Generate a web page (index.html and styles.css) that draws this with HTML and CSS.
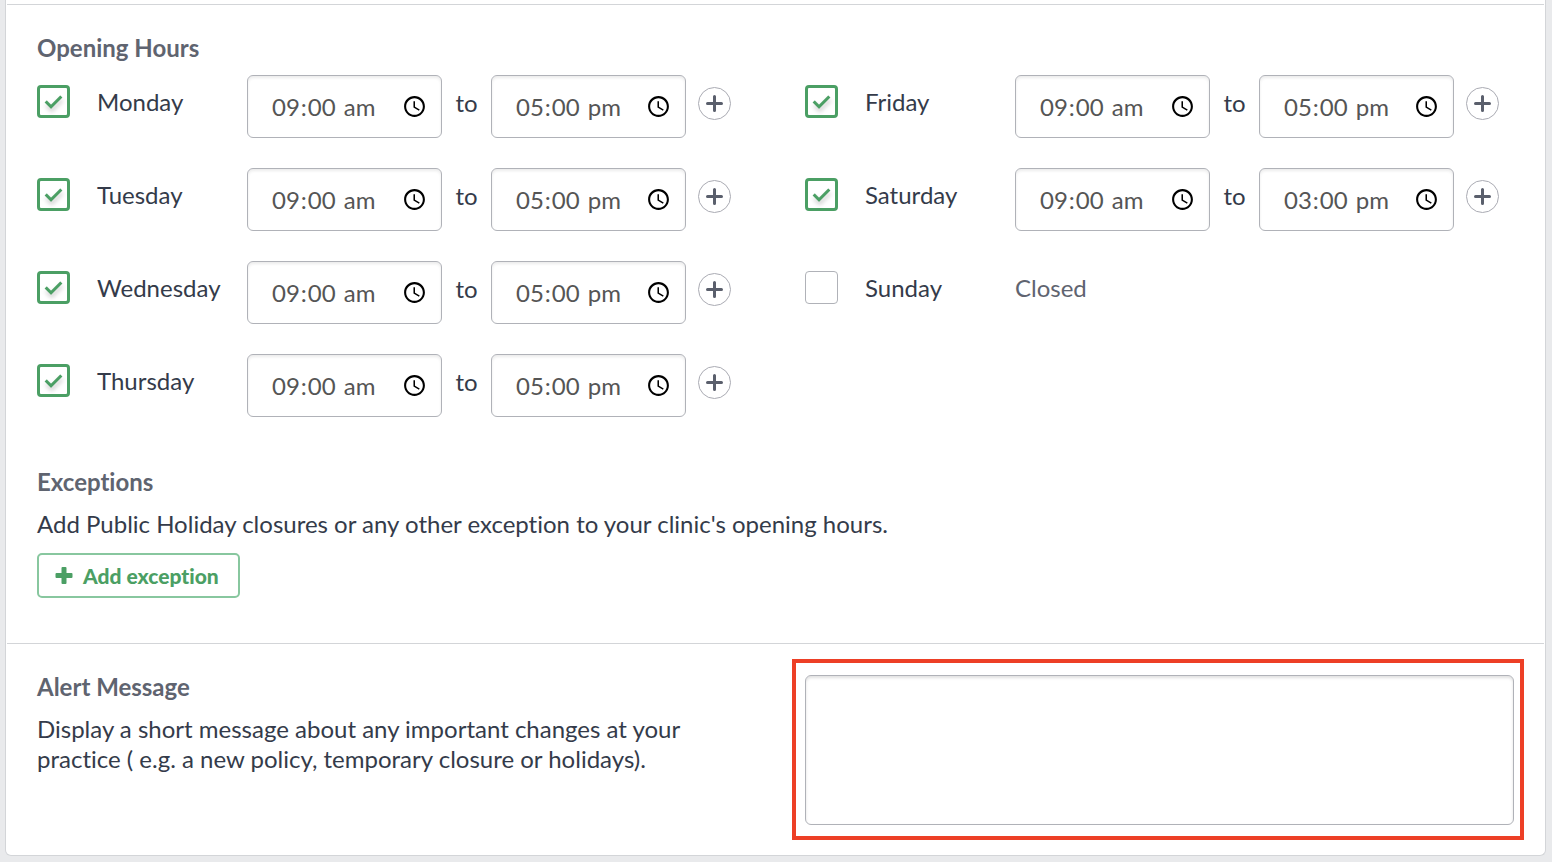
FILE: index.html
```
<!DOCTYPE html>
<html lang="en">
<head>
    <meta charset="UTF-8">
    <meta name="viewport" content="width=device-width, initial-scale=1.0">
    <title>Practice Settings</title>
    <link rel="stylesheet" href="styles.css">
</head>
<body>

    <main class="card">
        <!-- Opening hours and exceptions -->
        <section class="section">
            <h2 class="section-title">Opening Hours</h2>
            <div class="columns">
                <div class="column" id="weekdays"></div>
                <div class="column" id="weekend"></div>
            </div>

            <div class="exceptions">
                <h2 class="section-title">Exceptions</h2>
                <p class="section-text">Add Public Holiday closures or any other exception to your clinic's opening hours.</p>
                <button type="button" class="exception-button">
                    <svg width="18" height="18" viewBox="0 0 18 18" aria-hidden="true">
                        <path d="M7.500 0h3q1 0 1 1v5h5q1 0 1 1v3q0 1-1 1h-5v5q0 1-1 1h-3q-1 0-1-1v-5h-5q-1 0-1-1v-3q0-1 1-1h5v-5q0-1 1-1z"/>
                    </svg>
                    Add exception
                </button>
            </div>
        </section>

        <!-- Alert message -->
        <section class="section columns">
            <div class="column">
                <h2 class="section-title"><label for="alert-message">Alert Message</label></h2>
                <p class="section-text">Display a short message about any important changes at your practice ( e.g. a new policy, temporary closure or holidays).</p>
            </div>
            <div class="column message-column">
                <textarea class="message-box" id="alert-message" name="alert-message"></textarea>
                <div class="highlight"></div>
            </div>
        </section>
    </main>

    <script>
        const weekdays = [
            { name: 'Monday', from: '09:00', to: '17:00' },
            { name: 'Tuesday', from: '09:00', to: '17:00' },
            { name: 'Wednesday', from: '09:00', to: '17:00' },
            { name: 'Thursday', from: '09:00', to: '17:00' }
        ];
        const weekend = [
            { name: 'Friday', from: '09:00', to: '17:00' },
            { name: 'Saturday', from: '09:00', to: '15:00' },
            { name: 'Sunday' }
        ];

        // Open days get two time fields, other days only say Closed
        function dayHours(day) {
            if (!day.from) {
                return '<span class="closed">Closed</span>';
            }
            return `
                <input class="time-input" type="time" aria-label="${day.name} opens" value="${day.from}">
                <span class="to">to</span>
                <input class="time-input" type="time" aria-label="${day.name} closes" value="${day.to}">
                <button type="button" class="add-hours" aria-label="Add hours for ${day.name}">
                    <svg width="17" height="17" viewBox="0 0 17 17" aria-hidden="true">
                        <path d="M8.500 1.500v14M1.500 8.500h14"/>
                    </svg>
                </button>
            `;
        }

        function showDays(containerId, days) {
            const container = document.getElementById(containerId);
            days.forEach(day => {
                const id = day.name.toLowerCase();
                const row = document.createElement('div');
                row.classList.add('day-row');
                row.innerHTML = `
                    <input class="day-check" type="checkbox" id="${id}" ${day.from ? 'checked' : ''}>
                    <label class="day-name" for="${id}">${day.name}</label>
                    ${dayHours(day)}
                `;
                container.appendChild(row);
            });
        }

        showDays('weekdays', weekdays);
        showDays('weekend', weekend);
    </script>

</body>
</html>
```

FILE: styles.css
```
* {
    box-sizing: border-box;
}

body {
    margin: 0;
    padding: 0 6px 6px 5px;
    background-color: #e9eaec;
    color: #343b4a;
    font-family: Lato, sans-serif;
    font-size: 24px;
    line-height: 30px;
    font-variant-ligatures: none;
}

.card {
    padding: 4px 1px 0;
    background-color: #fff;
    border: 1px solid #d3d5d8;
    border-top: none;
    border-radius: 0 0 6px 6px;
}

.section {
    padding: 28px 0 45px;
    border-top: 1px solid #d3d5d8;
}

.section-title {
    margin: 0;
    color: #5f6470;
    font-size: 24px;
    font-weight: bold;
}

.section > .section-title,
.exceptions {
    padding: 0 30px;
}

.section-text {
    margin: 12px 0 14px;
}

.columns {
    display: grid;
    grid-template-columns: 1fr 1fr;
    padding-right: 1px;
}

.column {
    padding: 0 30px;
}

/* Opening hours */
.day-row {
    display: flex;
    align-items: flex-start;
    min-height: 63px;
    margin-bottom: 30px;
}

.section-title + .columns {
    margin-top: 12px;
}

.day-check {
    appearance: none;
    display: grid;
    place-content: center;
    flex: none;
    width: 33px;
    height: 33px;
    margin: 10px 27px 0 0;
    background-color: #fff;
    border: 1px solid #b0b2b8;
    border-radius: 4px;
}

.day-check:checked {
    border: 3px solid #4b9f64;
}

.day-check:checked::before {
    content: "";
    width: 9px;
    height: 16px;
    margin-bottom: 4px;
    border: solid #4b9f64;
    border-width: 0 3px 3px 0;
    transform: rotate(45deg);
    filter: drop-shadow(3px 2px 2px rgba(0, 0, 0, 0.2));
    box-sizing: border-box;
}

.day-name {
    width: 150px;
    padding-top: 12px;
}

.time-input {
    width: 195px;
    height: 63px;
    padding: 0 11px 0 23px;
    background-color: #fff;
    border: 1px solid #b0b2b8;
    border-radius: 6px;
    box-shadow: inset 0 2px 3px rgba(0, 0, 0, 0.08);
    color: #555;
    font-family: inherit;
    font-size: 24px;
}

.time-input::-webkit-datetime-edit-ampm-field {
    text-transform: lowercase;
}

.to {
    width: 49px;
    padding-top: 13px;
    text-align: center;
}

.closed {
    padding-top: 12px;
    color: #5f6470;
}

.add-hours {
    display: grid;
    place-content: center;
    width: 33px;
    height: 33px;
    margin: 12px 0 0 12px;
    padding: 0;
    background-color: #fff;
    border: 1px solid #aaabb3;
    border-radius: 50%;
    cursor: pointer;
}

.add-hours svg {
    fill: none;
    stroke: #5a5f6c;
    stroke-width: 3;
    stroke-linecap: round;
}

/* Exceptions */
.exceptions {
    margin-top: 20px;
}

.exception-button {
    display: flex;
    align-items: center;
    gap: 10px;
    height: 45px;
    padding: 0 19px 0 16px;
    background-color: #fff;
    border: 2px solid #88c79f;
    border-radius: 5px;
    color: #4b9f64;
    font-family: Lato, sans-serif;
    font-size: 21px;
    font-weight: 900;
    font-variant-ligatures: none;
    cursor: pointer;
}

.exception-button svg {
    fill: #4b9f64;
}

/* Alert message */
.message-column {
    position: relative;
    padding: 3px 29px 0 30px;
}

.message-box {
    display: block;
    width: 100%;
    height: 150px;
    padding: 12px 24px;
    border: 1px solid #b0b2b8;
    border-radius: 6px;
    box-shadow: inset 0 2px 3px rgba(0, 0, 0, 0.12);
    color: #555;
    font-family: inherit;
    font-size: 24px;
    resize: none;
}

.highlight {
    position: absolute;
    inset: -13px 19px -15px 17px;
    border: 4px solid #ed3f26;
    pointer-events: none;
}

.card > .section:last-child {
    padding-bottom: 30px;
}
```
